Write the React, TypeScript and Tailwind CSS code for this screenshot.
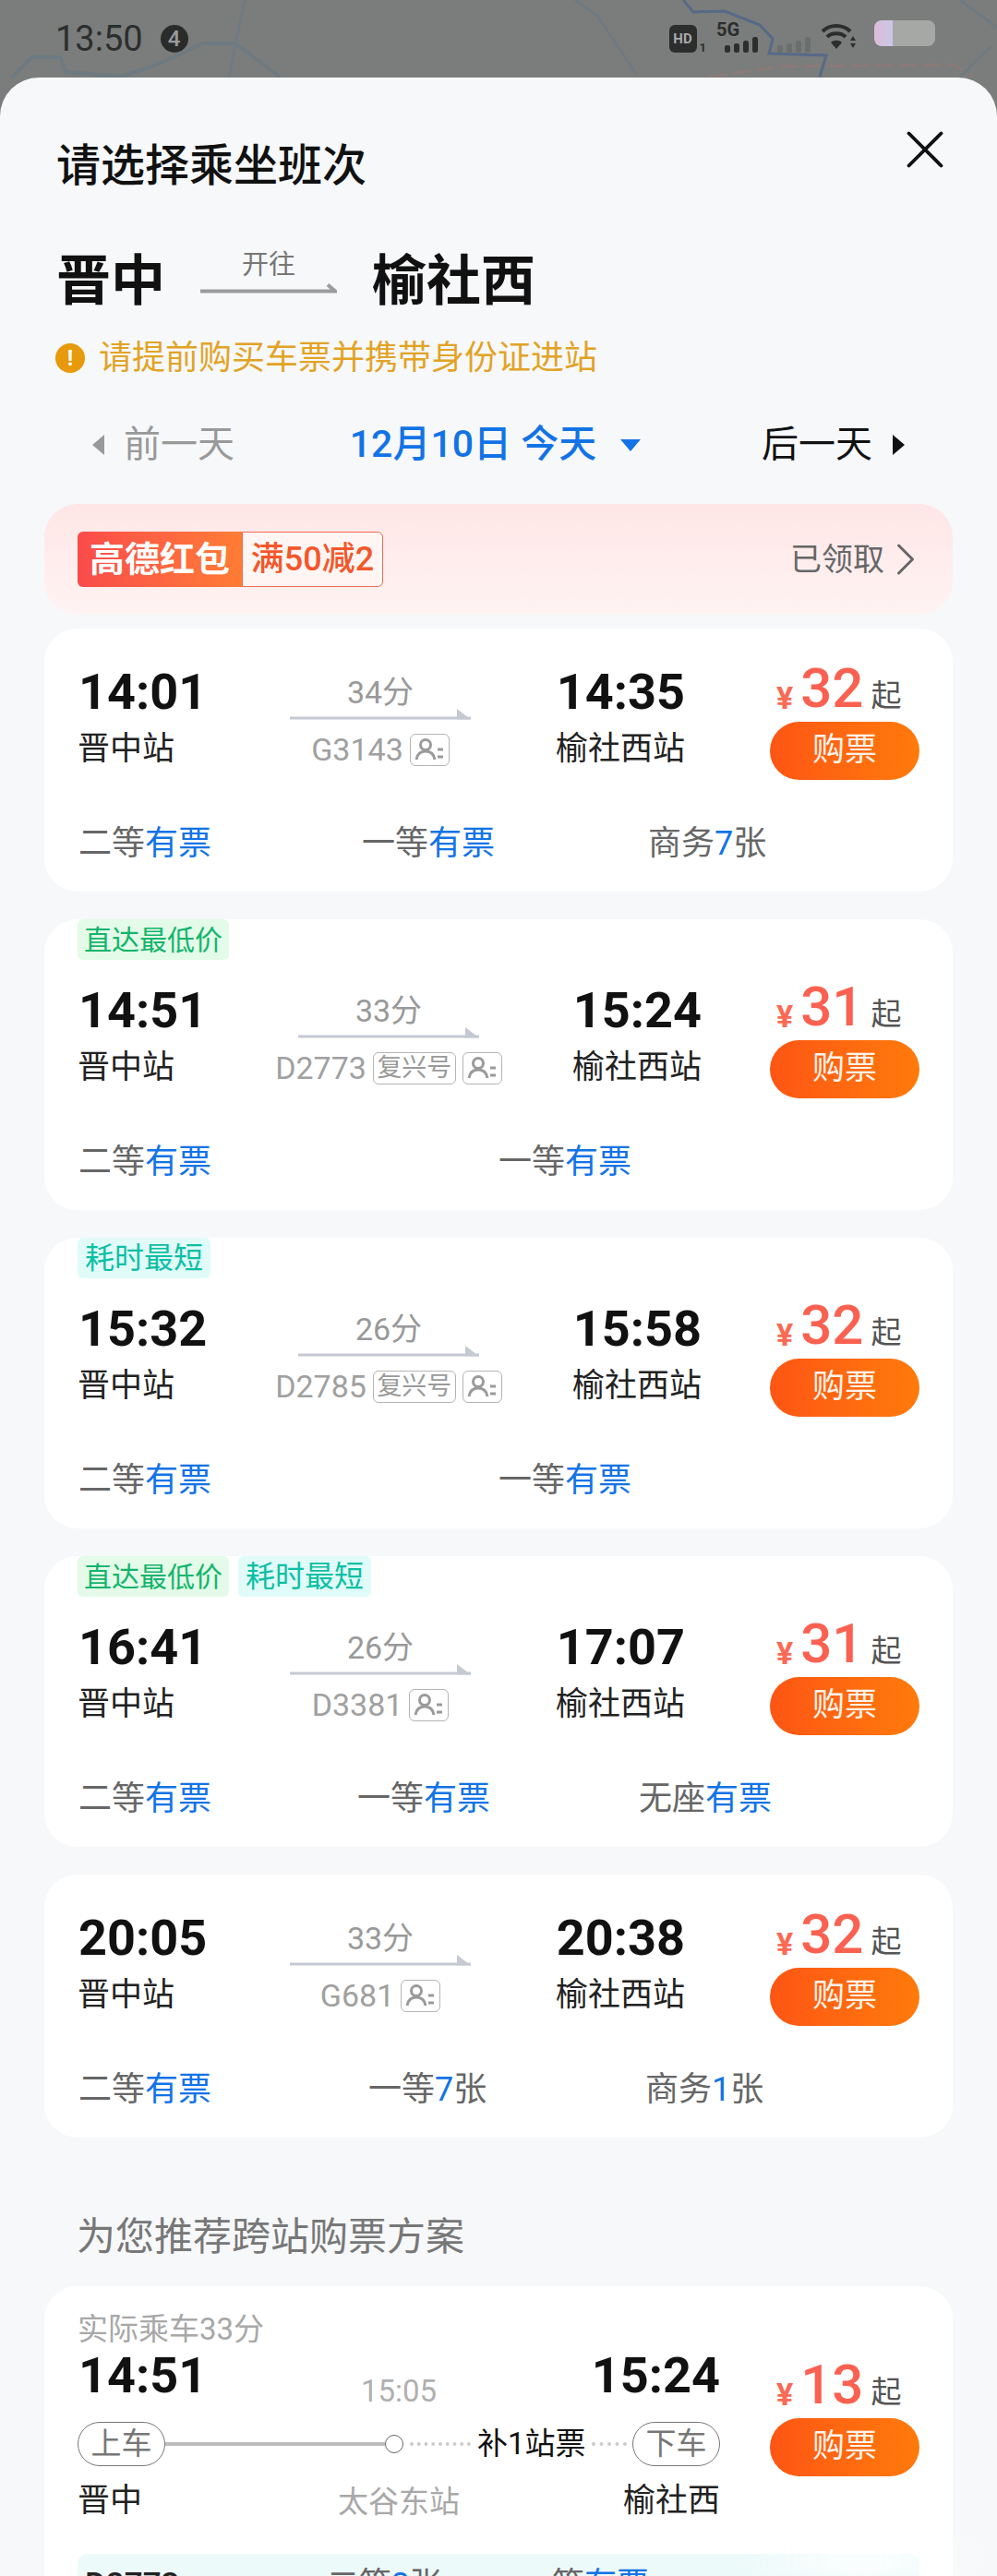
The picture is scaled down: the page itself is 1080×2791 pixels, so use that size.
import { X, ChevronRight } from 'lucide-react';

type Seat = { label: string; value: string; unit?: string; width: string };
type Train = {
  tags: { text: string; color: string }[];
  dep: string;
  arr: string;
  dur: string;
  no: string;
  fuxing?: boolean;
  price: string;
  seats: Seat[];
};

const green = 'bg-[#e3fbe8] px-[7px] text-[30px] text-[#14b46c]';
const teal = 'bg-[#e0fbf8] px-[8px] text-[32px] text-[#0cbfa5]';

const trains: Train[] = [
  {
    tags: [],
    dep: '14:01',
    arr: '14:35',
    dur: '34分',
    no: 'G3143',
    price: '32',
    seats: [
      { label: '二等', value: '有票', width: 'w-[307px]' },
      { label: '一等', value: '有票', width: 'w-[310px]' },
      { label: '商务', value: '7', unit: '张', width: 'w-[200px]' },
    ],
  },
  {
    tags: [{ text: '直达最低价', color: green }],
    dep: '14:51',
    arr: '15:24',
    dur: '33分',
    no: 'D2773',
    fuxing: true,
    price: '31',
    seats: [
      { label: '二等', value: '有票', width: 'w-[455px]' },
      { label: '一等', value: '有票', width: 'w-[200px]' },
    ],
  },
  {
    tags: [{ text: '耗时最短', color: teal }],
    dep: '15:32',
    arr: '15:58',
    dur: '26分',
    no: 'D2785',
    fuxing: true,
    price: '32',
    seats: [
      { label: '二等', value: '有票', width: 'w-[455px]' },
      { label: '一等', value: '有票', width: 'w-[200px]' },
    ],
  },
  {
    tags: [
      { text: '直达最低价', color: green },
      { text: '耗时最短', color: teal },
    ],
    dep: '16:41',
    arr: '17:07',
    dur: '26分',
    no: 'D3381',
    price: '31',
    seats: [
      { label: '二等', value: '有票', width: 'w-[302px]' },
      { label: '一等', value: '有票', width: 'w-[305px]' },
      { label: '无座', value: '有票', width: 'w-[200px]' },
    ],
  },
  {
    tags: [],
    dep: '20:05',
    arr: '20:38',
    dur: '33分',
    no: 'G681',
    price: '32',
    seats: [
      { label: '二等', value: '有票', width: 'w-[314px]' },
      { label: '一等', value: '7', unit: '张', width: 'w-[300px]' },
      { label: '商务', value: '1', unit: '张', width: 'w-[200px]' },
    ],
  },
];

function IdBadge() {
  return (
    <span className="flex h-[35px] w-[43px] items-center justify-center rounded-[6px] border border-[#b4b4b4]">
      <svg width="33" height="26" viewBox="0 0 33 26" fill="none" stroke="#9a9a9a" strokeWidth="3">
        <circle cx="12" cy="8" r="5.5" />
        <path d="M2 24c1-6 5-9 10-9s9 3 10 9" />
        <path d="M25 13h6M25 21h6" />
      </svg>
    </span>
  );
}

function Price({ value }: { value: string }) {
  return (
    <div className="w-[162px] shrink-0">
      <div className="flex h-[63px] items-end pl-[7px]">
        <span className="mb-[9px] text-[34px] leading-[34px] font-bold text-[#fa6a55]">¥</span>
        <span className="mb-[6px] ml-[8px] text-[60px] leading-[60px] font-medium text-[#fa6150]">{value}</span>
        <span className="mb-[8px] ml-[8px] text-[33px] leading-[40px] text-[#555]">起</span>
      </div>
      <div className="flex h-[63px] items-center justify-center rounded-full bg-gradient-to-r from-[#fd5514] to-[#ff7a0a] text-[35px] text-[#fff4ec]">
        购票
      </div>
    </div>
  );
}

function TrainCard({ t }: { t: Train }) {
  const mid = t.fuxing ? 'w-[282px]' : 'w-[256px]';
  const dep = t.fuxing ? 'w-[196px]' : 'w-[200px]';
  const arr = t.fuxing ? 'w-[198px]' : 'w-[202px]';
  return (
    <div className="rounded-[36px] bg-white px-[36px] pb-[27px]">
      {t.tags.length > 0 ? (
        <div className="flex h-[68px] items-start gap-[10px]">
          {t.tags.map(tag => (
            <span key={tag.text} className={`flex h-[44px] items-center rounded-[6px] ${tag.color}`}>
              {tag.text}
            </span>
          ))}
        </div>
      ) : (
        <div className="h-[38px]" />
      )}
      <div className="flex">
        <div className={dep}>
          <div className="h-[62px] pl-[1px] text-[54px] leading-[62px] font-bold text-[#111]">{t.dep}</div>
          <div className="h-[62px] text-[35px] leading-[62px] text-[#222]">晋中站</div>
        </div>
        <div className={`${mid} flex flex-col items-center`}>
          <div className="h-[62px] text-[34px] leading-[62px] text-[#999]">{t.dur}</div>
          <svg className="-mt-[14px]" width="196" height="14" viewBox="0 0 196 14" fill="#c5c9d3">
            <path d="M0 9.5h196v3H0z" />
            <path d="M181 1l15 11.5h-15z" />
          </svg>
          <div className="flex h-[62px] items-center gap-[7px] text-[34px] text-[#a0a0a0]">
            <span>{t.no}</span>
            {t.fuxing && (
              <span className="flex h-[35px] w-[90px] items-center justify-center rounded-[6px] border border-[#b4b4b4] text-[27px] text-[#9a9a9a]">
                复兴号
              </span>
            )}
            <IdBadge />
          </div>
        </div>
        <div className={`${arr} text-right`}>
          <div className="h-[62px] text-[54px] leading-[62px] font-bold text-[#111]">{t.arr}</div>
          <div className="h-[62px] text-[35px] leading-[62px] text-[#222]">榆社西站</div>
        </div>
        <div className="ml-auto">
          <Price value={t.price} />
        </div>
      </div>
      <div className="mt-[44px] flex h-[50px] items-center pl-[1px] text-[36px] text-[#666]">
        {t.seats.map(s => (
          <div key={s.label} className={`${s.width} shrink-0`}>
            {s.label}
            <span className="text-[#1273e6]">{s.value}</span>
            {s.unit}
          </div>
        ))}
      </div>
    </div>
  );
}

function StatusBar() {
  return (
    <div className="relative flex h-[84px] items-start justify-between pt-[22px] pr-[67px] pl-[60px]">
      <svg className="absolute inset-0" width="1080" height="84" viewBox="0 0 1080 84" fill="none">
        <path d="M0 97L34 62h31l7 16 59 5 34-11 55-25h35l48 36" stroke="#6d7a82" strokeWidth="4" />
        <path d="M265 0l-17 83" stroke="#6f7b82" strokeWidth="3" />
        <path d="M623 0l24 17 42 63" stroke="#6f7a80" strokeWidth="3" />
        <path d="M740 0l11 13 34-1 38 15 14 15-4 16 62 2-7 23" stroke="#566a88" strokeWidth="3" />
        <path d="M768 83l79-11 186-2 21 13" stroke="#8a7a78" strokeWidth="3" strokeDasharray="18 8" />
        <path d="M1040 0l40 30M1040 83l34-33" stroke="#6f7a80" strokeWidth="3" />
      </svg>
      <div className="relative flex items-center gap-[19px]">
        <span className="text-[38px] leading-[40px] text-[#2c2e2e]">13:50</span>
        <span className="flex h-[30px] w-[30px] items-center justify-center rounded-full bg-[#2a2b2b] text-[24px] font-medium text-[#9a9c9c]">
          4
        </span>
      </div>
      <div className="relative flex items-start">
        <span className="mt-[5px] flex h-[30px] w-[30px] items-center justify-center rounded-[6px] bg-[#2c2d2d] text-[15px] font-bold text-[#a8aaaa]">
          HD
        </span>
        <span className="mt-[22px] ml-[3px] text-[13px] leading-[16px] font-bold text-[#2c2d2d]">1</span>
        <div className="relative ml-[11px] h-[36px] w-[46px]">
          <span className="block text-[20px] leading-[20px] font-bold text-[#2c2d2d]">5G</span>
          <svg className="absolute top-[18px] left-[9px]" width="36" height="17" viewBox="0 0 36 17" fill="#2c2d2d">
            <rect x="0" y="9" width="6" height="8" rx="2.5" />
            <rect x="10" y="7" width="6" height="10" rx="2.5" />
            <rect x="20" y="4" width="6" height="13" rx="2.5" />
            <rect x="30" y="0" width="6" height="17" rx="2.5" />
          </svg>
        </div>
        <svg className="mt-[18px] ml-[20px]" width="36" height="17" viewBox="0 0 36 17" fill="#6a6e6c">
          <rect x="0" y="9" width="6" height="8" rx="2.5" />
          <rect x="10" y="7" width="6" height="10" rx="2.5" />
          <rect x="20" y="4" width="6" height="13" rx="2.5" />
          <rect x="30" y="0" width="6" height="17" rx="2.5" />
        </svg>
        <svg className="mt-[3px] ml-[12px]" width="38" height="30" viewBox="0 0 38 30" fill="none" stroke="#2c2d2d" strokeWidth="4">
          <path d="M1 9c8-8 22-8 30 0" />
          <path d="M6 15c5-5 15-5 20 0" />
          <path d="M16 28l-6-7c3-3 9-3 12 0z" fill="#2c2d2d" stroke="none" />
          <path d="M34 14l3 5h-6zM31 22h6l-3 5z" fill="#2c2d2d" stroke="none" />
        </svg>
        <div className="ml-[19px] flex h-[28px] w-[66px] overflow-hidden rounded-[8px]">
          <div className="w-[20px] bg-gradient-to-r from-[#dcbcd8] to-[#c9c8e8]" />
          <div className="flex-1 bg-[#a6a8a6]" />
        </div>
      </div>
    </div>
  );
}

export default function App() {
  return (
    <div className="relative h-[2791px] w-[1080px] overflow-hidden bg-[#7a7d7b] font-[Roboto,'Noto_Sans_CJK_SC',sans-serif]">
      <StatusBar />
      <div className="h-[2707px] rounded-t-[42px] bg-[#f6f8fa]">
        <div className="flex items-start justify-between pt-[66px] pr-[43px] pl-[61px]">
          <h1 className="h-[60px] text-[48px] leading-[60px] font-medium text-[#111]">请选择乘坐班次</h1>
          <X className="-mt-[23px] text-[#111]" size={70} strokeWidth={1.3} />
        </div>

        <div className="mt-[60px] flex h-[70px] items-center pl-[61px]">
          <span className="text-[59px] leading-[70px] font-bold text-[#111]">晋中</span>
          <div className="mx-[38px] mb-[22px] flex w-[148px] flex-col items-center">
            <span className="text-[29px] leading-[34px] text-[#777]">开往</span>
            <svg className="mt-[2px]" width="148" height="12" viewBox="0 0 148 12" fill="none">
              <path d="M0 9.5h146l-8-7" stroke="#9c9c9c" strokeWidth="4" />
            </svg>
          </div>
          <span className="text-[59px] leading-[70px] font-bold text-[#111]">榆社西</span>
        </div>

        <div className="mt-[28px] flex h-[40px] items-center gap-[15px] pl-[60px]">
          <span className="flex h-[32px] w-[32px] items-center justify-center rounded-full bg-[#e69a0c] text-[24px] font-bold text-white">
            !
          </span>
          <span className="text-[36px] leading-[40px] text-[#e2a325]">请提前购买车票并携带身份证进站</span>
        </div>

        <div className="mt-[44px] flex h-[60px] items-center justify-between px-[100px] text-[40px]">
          <div className="flex items-center gap-[21px] text-[#999]">
            <svg width="13" height="22" viewBox="0 0 13 22" fill="#999">
              <path d="M13 0v22L0 11z" />
            </svg>
            <span>前一天</span>
          </div>
          <div className="-ml-[6px] flex items-center gap-[26px] text-[41px] font-medium text-[#1273e6]">
            <span>12月10日 今天</span>
            <svg width="22" height="13" viewBox="0 0 22 13" fill="#1273e6">
              <path d="M0 0h22L11 13z" />
            </svg>
          </div>
          <div className="flex items-center gap-[22px] text-[#111]">
            <span>后一天</span>
            <svg width="13" height="22" viewBox="0 0 13 22" fill="#111">
              <path d="M0 0v22l13-11z" />
            </svg>
          </div>
        </div>

        <div className="mx-[48px] mt-[34px] flex flex-col gap-[15px]">
          <div className="flex h-[120px] items-center justify-between rounded-[36px] bg-gradient-to-b from-[#ffe6e6] to-[#fff3f3] pr-[42px] pl-[36px]">
            <div className="flex h-[60px]">
              <span className="flex w-[178px] items-center justify-center rounded-l-[6px] bg-gradient-to-r from-[#f94a4a] to-[#ff7c34] text-[38px] font-bold text-white">
                高德红包
              </span>
              <span className="flex w-[153px] items-center justify-center rounded-r-[6px] border border-[#ef6a50] bg-[#fff6f4] text-[36px] font-medium text-[#f4562a]">
                满50减2
              </span>
            </div>
            <div className="flex items-center text-[34px] text-[#666]">
              <span>已领取</span>
              <ChevronRight className="-mr-[21px] -ml-[7px]" size={60} strokeWidth={1.2} />
            </div>
          </div>

          <div className="flex flex-col gap-[30px]">
            {trains.map(t => (
              <TrainCard key={t.dep} t={t} />
            ))}
          </div>
        </div>

        <h2 className="mt-[80px] ml-[83px] h-[56px] text-[42px] leading-[56px] text-[#777]">为您推荐跨站购票方案</h2>

        <div className="mx-[48px] mt-[25px] h-[400px] rounded-t-[36px] bg-white px-[36px] pt-[28px]">
          <div className="h-[38px] text-[33px] leading-[38px] text-[#a8a8a8]">实际乘车33分</div>
          <div className="flex">
            <div className="w-[696px]">
              <div className="grid h-[62px] grid-cols-3 items-start">
                <span className="pl-[1px] text-[54px] leading-[62px] font-bold text-[#111]">14:51</span>
                <span className="mt-[17px] text-center text-[33px] leading-[62px] text-[#b0b0b0]">15:05</span>
                <span className="text-right text-[54px] leading-[62px] font-bold text-[#111]">15:24</span>
              </div>
              <div className="mt-[19px] flex h-[48px] items-center">
                <span className="flex h-[48px] w-[95px] shrink-0 items-center justify-center rounded-full border border-[#777] text-[33px] text-[#777]">
                  上车
                </span>
                <div className="h-[4px] w-[238px] bg-[#bdbdbd]" />
                <span className="h-[20px] w-[20px] shrink-0 rounded-full border border-[#666]" />
                <div className="mx-[7px] w-[66px] border-t-4 border-dotted border-[#cccccc]" />
                <span className="shrink-0 text-[33px] text-[#111]">补1站票</span>
                <div className="mx-[6px] flex-1 border-t-4 border-dotted border-[#cccccc]" />
                <span className="flex h-[48px] w-[95px] shrink-0 items-center justify-center rounded-full border border-[#777] text-[33px] text-[#777]">
                  下车
                </span>
              </div>
              <div className="mt-[12px] grid h-[50px] grid-cols-3 items-center text-[35px]">
                <span className="text-[#222]">晋中</span>
                <span className="text-center text-[33px] text-[#a8a8a8]">太谷东站</span>
                <span className="text-right text-[#222]">榆社西</span>
              </div>
            </div>
            <div className="mt-[14px] ml-auto">
              <Price value="13" />
            </div>
          </div>
          <div className="mt-[33px] flex h-[68px] items-center rounded-[12px] bg-[#edfafa] pl-[8px] text-[35px] text-[#666]">
            <span className="w-[262px] font-medium text-[#222]">D2773</span>
            <span className="w-[209px]">
              二等<span className="text-[#1273e6]">2</span>张
            </span>
            <span>
              一等<span className="text-[#1273e6]">有票</span>
            </span>
          </div>
        </div>
      </div>
      <div className="absolute right-[10px] bottom-0 h-[40px] w-[270px] bg-gradient-to-r from-transparent via-white to-transparent opacity-80 blur-[4px]" />
    </div>
  );
}
